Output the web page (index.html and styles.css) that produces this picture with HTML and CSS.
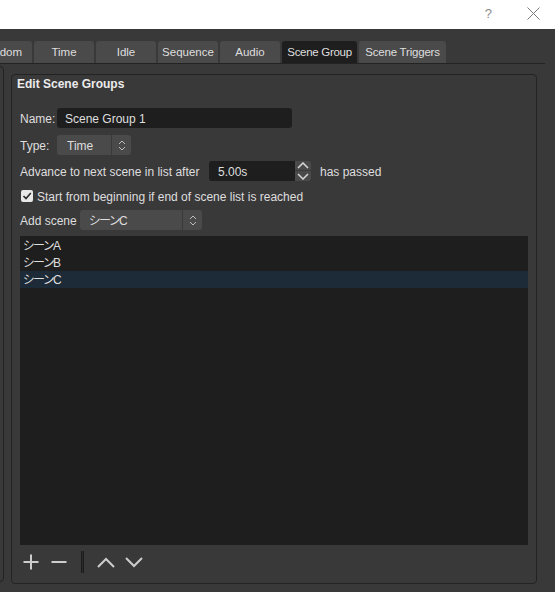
FILE: index.html
```html
<!DOCTYPE html>
<html lang="ja">
<head>
<meta charset="utf-8">
<title>Scene Group</title>
<link rel="stylesheet" href="styles.css">
</head>
<body>
<div class="titlebar">
  <span class="help">?</span>
  <svg class="close" width="13" height="13" viewBox="0 0 13 13"><path d="M0.5 0.5 L12.5 12.5 M12.5 0.5 L0.5 12.5" stroke="#7c7c7c" stroke-width="1" fill="none"/></svg>
</div>
<div class="tabs">
  <div class="tab tab-cut">dom</div>
  <div class="tab tab-60">Time</div>
  <div class="tab tab-60">Idle</div>
  <div class="tab tab-60">Sequence</div>
  <div class="tab tab-60">Audio</div>
  <div class="tab tab-active">Scene Group</div>
  <div class="tab tab-triggers">Scene Triggers</div>
</div>
<div class="pane">
  <div class="stub"></div>
  <div class="group">
    <div class="group-title">Edit Scene Groups</div>
    <div class="row row-name">
      <span class="lbl lbl-short">Name:</span>
      <div class="field name-field"><span class="txt">Scene Group 1</span></div>
    </div>
    <div class="row row-type">
      <span class="lbl lbl-short">Type:</span>
      <div class="combo combo-type">
        <span class="combo-text"><span class="txt">Time</span></span>
        <span class="combo-arrow"><svg width="8" height="11" viewBox="0 0 8 11"><path d="M1 4 L4 1 L7 4 M1 7 L4 10 L7 7" stroke="#bdbdbd" stroke-width="1" fill="none"/></svg></span>
      </div>
    </div>
    <div class="row row-spin">
      <span class="lbl lbl-advance">Advance to next scene in list after</span>
      <div class="spin">
        <div class="field spin-field"><span class="txt">5.00s</span></div>
        <div class="spin-btns">
          <div class="spin-btn spin-up"><svg width="12" height="7" viewBox="0 0 12 7"><path d="M1 6 L6 1 L11 6" stroke="#d8d8d8" stroke-width="1.5" fill="none"/></svg></div>
          <div class="spin-btn spin-down"><svg width="12" height="7" viewBox="0 0 12 7"><path d="M1 1 L6 6 L11 1" stroke="#d8d8d8" stroke-width="1.5" fill="none"/></svg></div>
        </div>
      </div>
      <span class="lbl after">has passed</span>
    </div>
    <div class="row row-check">
      <span class="checkbox"><svg width="12" height="12" viewBox="0 0 12 12"><path d="M2.5 6 L5 8.5 L9.8 3" stroke="#2a2a2a" stroke-width="1.6" fill="none"/></svg></span>
      <span class="lbl check-text">Start from beginning if end of scene list is reached</span>
    </div>
    <div class="row row-add">
      <span class="lbl lbl-add">Add scene</span>
      <div class="combo combo-add">
        <span class="combo-text"><span class="txt">シーンC</span></span>
        <span class="combo-arrow"><svg width="8" height="11" viewBox="0 0 8 11"><path d="M1 4 L4 1 L7 4 M1 7 L4 10 L7 7" stroke="#bdbdbd" stroke-width="1" fill="none"/></svg></span>
      </div>
    </div>
    <div class="list">
      <div class="item">シーンA</div>
      <div class="item">シーンB</div>
      <div class="item item-selected">シーンC</div>
    </div>
    <div class="toolbar">
      <span class="tool"><svg width="16" height="16" viewBox="0 0 16 16"><path d="M8 0.5 V15.5 M0.5 8 H15.5" stroke="#cdcdcd" stroke-width="2" fill="none"/></svg></span>
      <span class="tool tool-gap"><svg width="16" height="16" viewBox="0 0 16 16"><path d="M0.5 8 H15.5" stroke="#cdcdcd" stroke-width="2" fill="none"/></svg></span>
      <span class="tool-sep"></span>
      <span class="tool tool-after-sep"><svg width="18" height="11" viewBox="0 0 18 11"><path d="M1 10 L9 2 L17 10" stroke="#cdcdcd" stroke-width="2" fill="none"/></svg></span>
      <span class="tool tool-gap"><svg width="18" height="11" viewBox="0 0 18 11"><path d="M1 1 L9 9 L17 1" stroke="#cdcdcd" stroke-width="2" fill="none"/></svg></span>
    </div>
  </div>
</div>
</body>
</html>
```

FILE: styles.css
```css
html, body {
  margin: 0;
  padding: 0;
}
body {
  width: 555px;
  height: 592px;
  overflow: hidden;
  background: #3a393a;
  color: #dedede;
  font-family: "Liberation Sans", "Noto Sans CJK JP", sans-serif;
  font-size: 12px;
  line-height: 14px;
}
.titlebar {
  height: 29px;
  background: #ffffff;
  display: flex;
  align-items: center;
  justify-content: flex-end;
}
.help {
  color: #8a8a8a;
  font-size: 13px;
  margin-right: 35px;
  margin-top: -2px;
}
.close {
  margin-right: 15px;
  margin-top: -2px;
}
.tabs {
  margin-top: 12px;
  height: 22px;
  display: flex;
  gap: 2px;
  font-size: 11.5px;
}
.tab {
  height: 22px;
  background: #4b4a4b;
  border-radius: 3px 3px 0 0;
  display: flex;
  align-items: center;
  justify-content: center;
  line-height: 22px;
  box-sizing: border-box;
  color: #dedede;
}
.tab-cut {
  width: 32px;
  border-radius: 0 3px 0 0;
  justify-content: flex-end;
  padding-right: 10px;
}
.tab-60 { width: 60px; }
.tab-active {
  width: 75px;
  background: #1f1e1f;
  letter-spacing: -0.3px;
}
.tab-triggers { width: 87px; letter-spacing: -0.2px; }
.pane {
  width: 545px;
  border-top: 1px solid #242324;
  display: flex;
  align-items: flex-start;
}
.stub {
  width: 14px;
  height: 516px;
  margin-left: -10px;
  margin-top: 2px;
  border: 1px solid #242324;
  border-radius: 4px;
  box-sizing: border-box;
}
.group {
  width: 526px;
  height: 510px;
  margin-left: 7px;
  margin-top: 10px;
  border: 1px solid #242324;
  border-radius: 4px;
  box-sizing: border-box;
  display: flex;
  flex-direction: column;
}
.group-title {
  margin-top: 2px;
  padding-left: 5px;
  font-weight: bold;
  font-size: 12px;
  color: #ebebeb;
}
.row {
  display: flex;
  align-items: center;
  padding: 0 8px;
  height: 20px;
}
.row-name { margin-top: 17px; }
.row-type { margin-top: 7px; }
.row-spin { margin-top: 6px; }
.row-check { margin-top: 6px; height: 18px; }
.row-add { margin-top: 5px; }
.lbl {
  flex: none;
  padding-top: 2px;
}
.txt {
  padding-top: 2px;
}
.lbl-short { width: 37px; }
.lbl-advance { width: 189px; }
.lbl-add { width: 60px; }
.field {
  height: 20px;
  background: #1f1e1f;
  border-radius: 3px;
  box-sizing: border-box;
  display: flex;
  align-items: center;
}
.name-field {
  width: 235px;
  padding-left: 8px;
}
.combo {
  height: 20px;
  background: #4b4a4b;
  border-radius: 3px;
  display: flex;
  align-items: stretch;
}
.combo-text {
  display: flex;
  align-items: center;
  flex: 1;
  padding-left: 10px;
}
.combo-arrow {
  width: 19px;
  border-left: 1px solid #3a393a;
  display: flex;
  align-items: center;
  justify-content: center;
}
.combo-type { width: 74px; }
.combo-add { width: 122px; }
.combo-add .combo-text {
  padding-left: 9px;
  font-feature-settings: "palt";
  letter-spacing: -1px;
}
.spin {
  display: flex;
  width: 102px;
  height: 20px;
}
.spin-field {
  width: 86px;
  padding-left: 9px;
  border-radius: 3px 0 0 3px;
}
.spin-btns {
  width: 16px;
  display: flex;
  flex-direction: column;
}
.spin-btn {
  height: 10px;
  background: #4b4a4b;
  display: flex;
  align-items: center;
  justify-content: center;
}
.spin-up {
  border-radius: 0 3px 0 0;
  border-bottom: 1px solid #3a393a;
  box-sizing: border-box;
}
.spin-down {
  border-radius: 0 0 3px 0;
}
.after { margin-left: 9px; }
.checkbox {
  width: 12px;
  height: 12px;
  margin-left: 1px;
  background: #e8e8e8;
  border-radius: 2px;
  display: flex;
}
.check-text { margin-left: 4px; }
.list {
  margin: 6px 8px 0 8px;
  height: 309px;
  background: #1f1e1f;
  padding-top: 1px;
  box-sizing: border-box;
}
.item {
  height: 17px;
  line-height: 17px;
  padding-left: 3px;
  padding-top: 1px;
  box-sizing: border-box;
  font-feature-settings: "palt";
  letter-spacing: -1px;
}
.item-selected {
  background: #1d2a37;
}
.toolbar {
  margin-top: 6px;
  height: 22px;
  display: flex;
  align-items: center;
  padding-left: 8px;
}
.tool {
  width: 22px;
  height: 22px;
  display: flex;
  align-items: center;
  justify-content: center;
}
.tool-gap { margin-left: 6px; }
.tool-sep {
  width: 3px;
  height: 22px;
  margin-left: 11px;
  background: #2c2b2c;
  border-left: 1px solid #1c1b1c;
  border-right: 1px solid #1c1b1c;
  box-sizing: border-box;
}
.tool-after-sep { margin-left: 11px; }
```
